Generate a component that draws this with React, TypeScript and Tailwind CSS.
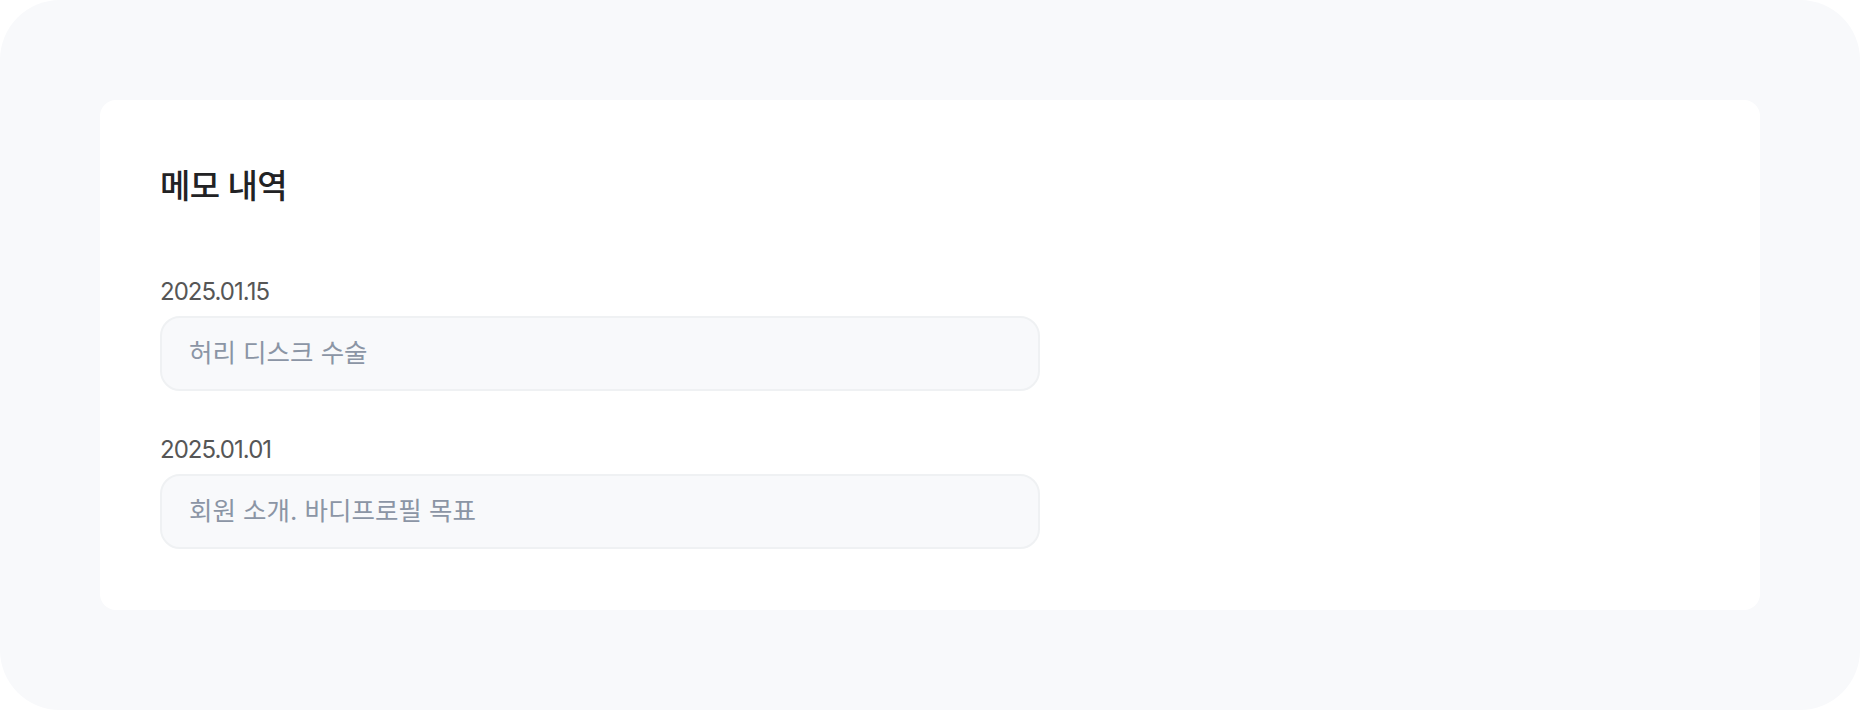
const memos = [
  { date: "2025.01.15", text: "허리 디스크 수술" },
  { date: "2025.01.01", text: "회원 소개. 바디프로필 목표" },
];

const font = "font-['Inter','Noto_Sans_CJK_KR',sans-serif]";

export default function App() {
  return (
    <div className={`w-[1860px] h-[710px] bg-white ${font}`}>
      <div className="h-full rounded-[60px] bg-[#f8f9fb] p-[100px]">
        <div className="h-full rounded-2xl bg-white p-[60px]">
          <h2 className="text-[33px] leading-[52px] font-medium text-[#222224] tracking-[-0.02em]">메모 내역</h2>
          <div className="mt-[64px] flex flex-col gap-[43px]">
            {memos.map((m) => (
              <div key={m.date} className="flex flex-col gap-2">
                <span className="text-[24px] leading-[32px] text-[#565656] tracking-[-0.04em]">{m.date}</span>
                <div className="w-[880px] h-[75px] flex items-center rounded-[20px] border-2 border-[#eff1f3] bg-[#f8f9fb] px-[27px]">
                  <span className="text-[25.5px] text-[#8b95a5]">{m.text}</span>
                </div>
              </div>
            ))}
          </div>
        </div>
      </div>
    </div>
  );
}
